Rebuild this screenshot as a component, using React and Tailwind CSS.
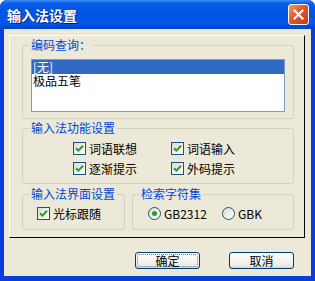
import React from 'react';

const font = { fontFamily: '"Noto Sans CJK SC", "Liberation Sans", sans-serif' };

const Check = ({ label, className = '' }) => (
  <div className={`flex items-center h-[13px] ${className}`}>
    <div className="w-[13px] h-[13px] border border-[#1c5180] bg-[linear-gradient(135deg,#dcdcd5,#ffffff)] flex items-center justify-center shrink-0">
      <svg width="9" height="9" viewBox="0 0 9 9">
        <path d="M1 4.2 L3.4 6.6 L8 1.8" fill="none" stroke="#21a121" strokeWidth="2" />
      </svg>
    </div>
    <span className="ml-[3px] text-[12px] leading-[14px] text-black whitespace-nowrap">{label}</span>
  </div>
);

const Radio = ({ label, checked, className = '' }) => (
  <div className={`flex items-center h-[13px] ${className}`}>
    <div className="w-[13px] h-[13px] rounded-full border border-[#1c5180] bg-[linear-gradient(135deg,#dcdcd5,#ffffff)] flex items-center justify-center shrink-0">
      {checked && <div className="w-[5px] h-[5px] rounded-full bg-[#21a121]" />}
    </div>
    <span className="ml-[3px] text-[12px] leading-[14px] text-black whitespace-nowrap">{label}</span>
  </div>
);

const Group = ({ title, className = '', children }) => (
  <fieldset className={`border border-[#d0d0bf] rounded-[3px] ${className}`}>
    <legend className="ml-[6px] px-[2px] text-[12px] leading-[14px] text-[#0046d5] whitespace-nowrap">{title}</legend>
    {children}
  </fieldset>
);

export default function App() {
  return (
    <div style={font} className="w-[315px] h-[281px] bg-[#0a3ed8] rounded-t-[7px] overflow-hidden flex flex-col">
      <div className="h-[29px] shrink-0 flex items-center pl-[7px] pr-[6px] bg-[linear-gradient(to_bottom,#3c8cf8_0%,#0a5ce8_12%,#0054e3_45%,#0058ea_80%,#0042c8_100%)]">
        <span className="text-white font-bold text-[14px] leading-[16px] [text-shadow:1px_1px_0_#0a1a6a]">输入法设置</span>
        <div className="ml-auto w-[21px] h-[21px] rounded-[3px] border border-white bg-[linear-gradient(135deg,#f09a7a,#e0572f_45%,#c53d18)] flex items-center justify-center">
          <svg width="11" height="11" viewBox="0 0 11 11">
            <path d="M1.5 1.5 L9.5 9.5 M9.5 1.5 L1.5 9.5" stroke="#fff" strokeWidth="2.2" strokeLinecap="square" />
          </svg>
        </div>
      </div>
      <div className="flex-1 ml-[4px] mr-[4px] mb-[5px] bg-[#ece9d8] flex flex-col">
        <div className="mt-[6px] ml-[5px] w-[296px] h-[203px] border-t border-l border-white border-r border-b border-r-black border-b-black flex flex-col">
          <Group title="编码查询：" className="mt-[2px] ml-[12px] w-[272px] h-[81px]">
            <div className="mt-[7px] ml-[8px] w-[254px] h-[53px] border border-[#7f9db9] bg-white text-[12px]">
              <div className="h-[14px] leading-[14px] bg-[#316ac5] text-white pl-[1px]">[无]</div>
              <div className="h-[14px] leading-[14px] text-black pl-[1px]">极品五笔</div>
            </div>
          </Group>
          <Group title="输入法功能设置" className="mt-[2px] ml-[12px] w-[272px] h-[63px]">
            <div className="mt-[7px] ml-[50px] grid grid-cols-[98px_auto] gap-y-[7px]">
              <Check label="词语联想" />
              <Check label="词语输入" />
              <Check label="逐渐提示" />
              <Check label="外码提示" />
            </div>
          </Group>
          <div className="mt-[3px] ml-[12px] flex">
            <Group title="输入法界面设置" className="w-[103px] h-[43px]">
              <Check label="光标跟随" className="mt-[6px] ml-[14px]" />
            </Group>
            <Group title="检索字符集" className="ml-[7px] w-[162px] h-[43px]">
              <div className="mt-[6px] ml-[15px] flex">
                <Radio label="GB2312" checked className="w-[74px]" />
                <Radio label="GBK" />
              </div>
            </Group>
          </div>
        </div>
        <div className="mt-[14px] flex">
          <button className="ml-[131px] w-[65px] h-[17px] rounded-[3px] border border-[#003c74] bg-[linear-gradient(to_bottom,#ffffff,#ecebe6_85%,#d6d0c5)] p-[1px]">
            <div className="w-full h-full rounded-[2px] border border-dotted border-[#6b7fa8] flex items-center justify-center">
              <span className="text-[12px] leading-[13px] text-black">确定</span>
            </div>
          </button>
          <button className="ml-[29px] w-[65px] h-[17px] rounded-[3px] border border-[#003c74] bg-[linear-gradient(to_bottom,#ffffff,#ecebe6_85%,#d6d0c5)] flex items-center justify-center">
            <span className="text-[12px] leading-[13px] text-black">取消</span>
          </button>
        </div>
      </div>
    </div>
  );
}
